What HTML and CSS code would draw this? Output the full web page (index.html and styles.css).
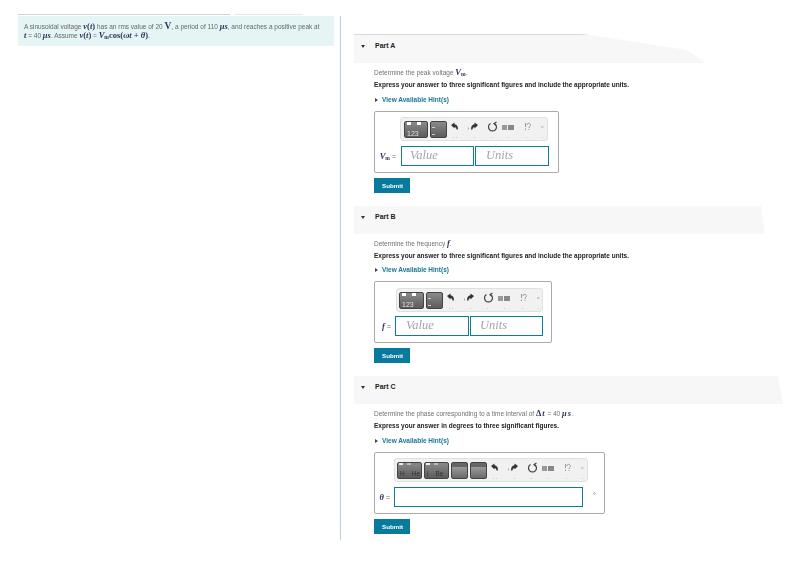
FILE: index.html
```html
<!DOCTYPE html>
<html lang="en">
<head>
<meta charset="utf-8">
<title>Sinusoidal voltage</title>
<link rel="stylesheet" href="styles.css">
</head>
<body>
<main class="page">
  <section class="intro-col">
    <div class="intro-rule"><span class="rule-a"></span><span class="rule-b"></span></div>
    <div class="intro">
      A sinusoidal voltage <b class="m"><i>v</i>(<i>t</i>)</b> has an rms value of 20 <b class="m big">V</b>, a period of 110 <b class="m"><i>μs</i></b>, and reaches a positive peak at<br>
      <b class="m"><i>t</i></b> = 40 <b class="m"><i>μs</i></b>. Assume <b class="m"><i>v</i>(<i>t</i>)</b> = <b class="m"><i>V</i><sub>m</sub>cos(<i>ωt</i> + <i>θ</i>)</b>.
    </div>
  </section>
  <section class="parts">
    <article class="part part-a">
      <header class="part-head head-a"><span class="caret"></span><strong>Part A</strong></header>
      <div class="part-body">
        <p class="prompt">Determine the peak voltage <b class="m"><i>V</i><sub>m</sub></b>.</p>
        <p class="task">Express your answer to three significant figures and include the appropriate units.</p>
        <p class="hint"><span class="tri"></span>View Available Hint(s)</p>
        <div class="answer ans-a">
          <div class="tb-row tb-a">
            <div class="toolbar">
              <span class="key k-a">123</span><span class="key k-b"></span>
              <svg class="tools" viewBox="0 0 98 22"><use href="#tools"/></svg>
            </div>
          </div>
          <div class="input-row">
            <span class="var"><b class="m"><i>V</i><sub>m</sub></b> =</span>
            <span class="field f-value-a">Value</span><span class="field f-units-a">Units</span>
          </div>
        </div>
        <button class="submit">Submit</button>
      </div>
    </article>
    <article class="part part-b">
      <header class="part-head head-b"><span class="caret"></span><strong>Part B</strong></header>
      <div class="part-body">
        <p class="prompt">Determine the frequency <b class="m"><i>f</i></b>.</p>
        <p class="task">Express your answer to three significant figures and include the appropriate units.</p>
        <p class="hint"><span class="tri"></span>View Available Hint(s)</p>
        <div class="answer ans-b">
          <div class="tb-row tb-b">
            <div class="toolbar">
              <span class="key k-a">123</span><span class="key k-b"></span>
              <svg class="tools" viewBox="0 0 98 22"><use href="#tools"/></svg>
            </div>
          </div>
          <div class="input-row">
            <span class="var"><b class="m"><i>f</i></b> =</span>
            <span class="field f-value-b">Value</span><span class="field f-units-b">Units</span>
          </div>
        </div>
        <button class="submit">Submit</button>
      </div>
    </article>
    <article class="part part-c">
      <header class="part-head head-c"><span class="caret"></span><strong>Part C</strong></header>
      <div class="part-body">
        <p class="prompt">Determine the phase corresponding to a time interval of <b class="m wide">Δ<i>t</i></b> = 40 <b class="m wide"><i>μs</i></b>.</p>
        <p class="task">Express your answer in degrees to three significant figures.</p>
        <p class="hint"><span class="tri"></span>View Available Hint(s)</p>
        <div class="answer ans-c">
          <div class="tb-row tb-c">
            <div class="toolbar">
              <span class="key k-c">H<span class="gap-h"></span>He</span><span class="key k-c">i<span class="gap-i"></span>Be</span><span class="key k-d"></span><span class="key k-d"></span>
              <svg class="tools" viewBox="0 0 98 22"><use href="#tools"/></svg>
            </div>
          </div>
          <div class="input-row">
            <span class="var"><b class="m"><i>θ</i></b> =</span>
            <span class="field f-wide"></span><span class="deg">°</span>
          </div>
        </div>
        <button class="submit">Submit</button>
      </div>
    </article>
  </section>
</main>
<svg class="defs" width="0" height="0" aria-hidden="true">
  <defs>
    <g id="tools">
      <g transform="translate(0 1)">
        <path d="M3 5.500L6.500 3v1.800Q10 5 10 10H8.600Q8.500 7.500 6.500 7.500V9z" fill="#333" transform="translate(-1 .5)"/>
        <path d="M29 5.500L25.500 3v1.800Q22 5 22 10h1.400Q23.500 7.500 25.500 7.500V9z" fill="#333" transform="translate(0 .5)"/>
        <path d="M19.500 8.500v2" stroke="#aaa" fill="none"/>
        <path d="M45.500 4.500a4 4 0 1 1-4 0M47.500 3l-2.500 1.500 2 2" fill="none" stroke="#444" stroke-width="1.200"/>
        <rect x="53" y="6" width="5" height="5" fill="#999"/>
        <rect x="59" y="6" width="6" height="5" fill="#888"/>
        <path d="M78 6a1.700 1.700 0 1 1 2.500 1.500L80 9M80 10v1M76.500 4v4M76.500 9.500v1.500" fill="none" stroke="#999" stroke-width="1"/>
        <path d="M92 8h2.500" stroke="#aaa" fill="none"/>
      </g>
      <path d="M4 19.500h1M7 19.500h1M25 19.500h1M42 19.500h1M59 19.500h1M77 19.500h1M93 19.500h1" stroke="#ccc" fill="none"/>
    </g>
  </defs>
</svg>
</body>
</html>
```
FILE: styles.css
```css
* { box-sizing: border-box; }
html, body { margin: 0; padding: 0; background: #fff; }
body { width: 785px; height: 561px; overflow: hidden; font-family: "Liberation Sans", Arial, sans-serif; color: #3b3b3b; }
.defs { position: absolute; }
.page { display: flex; align-items: flex-start; padding: 14px 0 0 18px; filter: blur(0.4px); }
.intro-col { width: 316px; flex: none; }
.intro-rule { height: 1px; display: flex; gap: 5px; margin-bottom: 1px; }
.rule-a { width: 212px; background: #d4d4d4; }
.rule-b { width: 68px; background: #e8e8e8; }
.intro { height: 30px; background: #e5f5f6; padding: 5.500px 6px 0; font-size: 6.500px; line-height: 9px; color: #666; white-space: nowrap; }
.m { font-family: "Liberation Serif", serif; font-weight: bold; font-size: 8.500px; line-height: 0; color: #2b3557; }
.m.big { font-size: 9.500px; }
.m.wide { letter-spacing: 1px; }
.m sub { font-size: 5.500px; line-height: 0; vertical-align: -1px; }
.parts { margin-left: 6px; margin-top: 2px; width: 445px; height: 524px; border-left: 1px solid #b6cfe0; padding-left: 13px; flex: none; }
.part { height: 170px; }
.part-a { padding-top: 18px; height: 190px; }
.part-head { height: 28px; display: flex; align-items: center; padding: 0 0 8px 7px; font-size: 7px; color: #222; background: #f7f7f7; }
.part-head strong { margin-left: 10px; font-weight: bold; }
.head-a { width: 351px; height: 29px; border-top: 1px solid #d8d8d8; clip-path: polygon(0 0, 229px 0, 333px 16px, 100% 100%, 0 100%); }
.head-b { width: 411px; clip-path: polygon(0 0, 407px 0, 100% 100%, 0 100%); }
.head-c { width: 429px; clip-path: polygon(0 0, 424px 0, 100% 100%, 0 100%); }
.caret { width: 0; height: 0; margin-top: 2px; border-left: 2.500px solid transparent; border-right: 2.500px solid transparent; border-top: 3px solid #333; }
.part-body { padding-left: 20px; }
.prompt { margin: 4.500px 0 0; height: 9px; font-size: 6.500px; line-height: 9px; color: #707070; white-space: nowrap; }
.task { margin: 4.500px 0 0; height: 8px; font-size: 6.500px; line-height: 8px; font-weight: bold; color: #222; white-space: nowrap; }
.hint { margin: 7px 0 0; height: 8px; font-size: 6.500px; line-height: 8px; font-weight: bold; color: #1a7596; white-space: nowrap; display: flex; align-items: center; }
.part-b .hint { margin-top: 6px; }
.tri { width: 0; height: 0; border-top: 2.200px solid transparent; border-bottom: 2.200px solid transparent; border-left: 3px solid #444; margin-right: 4px; margin-left: 1px; }
.answer { margin-top: 7px; border: 1px solid #aaa; border-radius: 2px; padding-top: 5px; height: 62px; }
.ans-a { width: 185px; }
.ans-b { width: 178px; }
.ans-c { width: 231px; }
.tb-row { display: flex; }
.tb-a { padding-left: 25px; }
.tb-b { padding: 1px 0 0 21px; }
.tb-c { padding-left: 19px; }
.toolbar { height: 24px; background: #f1f1f1; border: 1px solid #e0e0e0; border-radius: 3px; display: flex; align-items: center; padding-left: 2px; gap: 2px; overflow: hidden; }
.tb-a .toolbar { width: 148px; padding-left: 3px; }
.tb-b .toolbar { width: 147px; }
.tb-c .toolbar { width: 194px; }
.key { position: relative; height: 17px; flex: none; border: 1px solid #444; border-radius: 2px; background: linear-gradient(#8a8a8a, #5c5c5c); color: #e2e2e2; font-size: 7px; line-height: 1; white-space: nowrap; }
.k-a { width: 25px; padding-left: 2px; display: flex; align-items: flex-end; }
.k-a::before { content: ""; position: absolute; left: 2px; top: 0; width: 4px; height: 3px; background: #fff; box-shadow: 10px 0 #fff; }
.tb-a .k-a { width: 24px; }
.k-b { width: 17px; }
.k-b::before { content: ""; position: absolute; left: 1px; top: 5px; width: 3px; height: 6px; border-top: 1px solid #ccc; border-bottom: 1px solid #ccc; }
.k-c { width: 25px; color: #333; padding-left: 2px; font-size: 6.500px; display: flex; align-items: flex-end; }
.k-c::before { content: ""; position: absolute; left: 1px; top: 0; width: 4px; height: 2px; background: #eee; box-shadow: 8px 0 #bbb; }
.gap-h { display: inline-block; width: 7px; }
.gap-i { display: inline-block; width: 7px; }
.k-d { width: 17px; background: linear-gradient(#666 0 4px, #9a9a9a 4px, #6a6a6a); }
.tools { width: 98px; height: 22px; flex: none; }
.input-row { display: flex; align-items: center; margin-top: 5px; height: 20px; }
.tb-b + .input-row { margin-top: 4px; }
.var { font-size: 7px; color: #666; white-space: nowrap; text-align: right; padding-right: 4px; }
.ans-a .var { width: 26px; padding-right: 5px; }
.ans-b .var { width: 20px; }
.ans-c .var { width: 19px; }
.field { height: 20px; border: 1px solid #0f7a99; background: #fff; font-family: "Liberation Serif", serif; font-style: italic; font-size: 12.500px; line-height: 17px; color: #a3a3ad; padding-left: 8px; display: block; }
.f-value-a { width: 73px; margin-right: 1px; }
.f-units-a { width: 74px; padding-left: 10px; }
.f-value-b { width: 74px; margin-right: 1px; padding-left: 10px; }
.f-units-b { width: 73px; padding-left: 9px; }
.f-wide { width: 189px; }
.deg { margin-left: 10px; font-size: 7px; color: #3f7f95; margin-top: -3px; }
.submit { display: block; margin-top: 5px; width: 36px; height: 15px; border: 0; padding: 0 0 0 1px; background: #087a9e; color: #fff; font-family: "Liberation Sans", Arial, sans-serif; font-size: 6.200px; font-weight: bold; }
```
